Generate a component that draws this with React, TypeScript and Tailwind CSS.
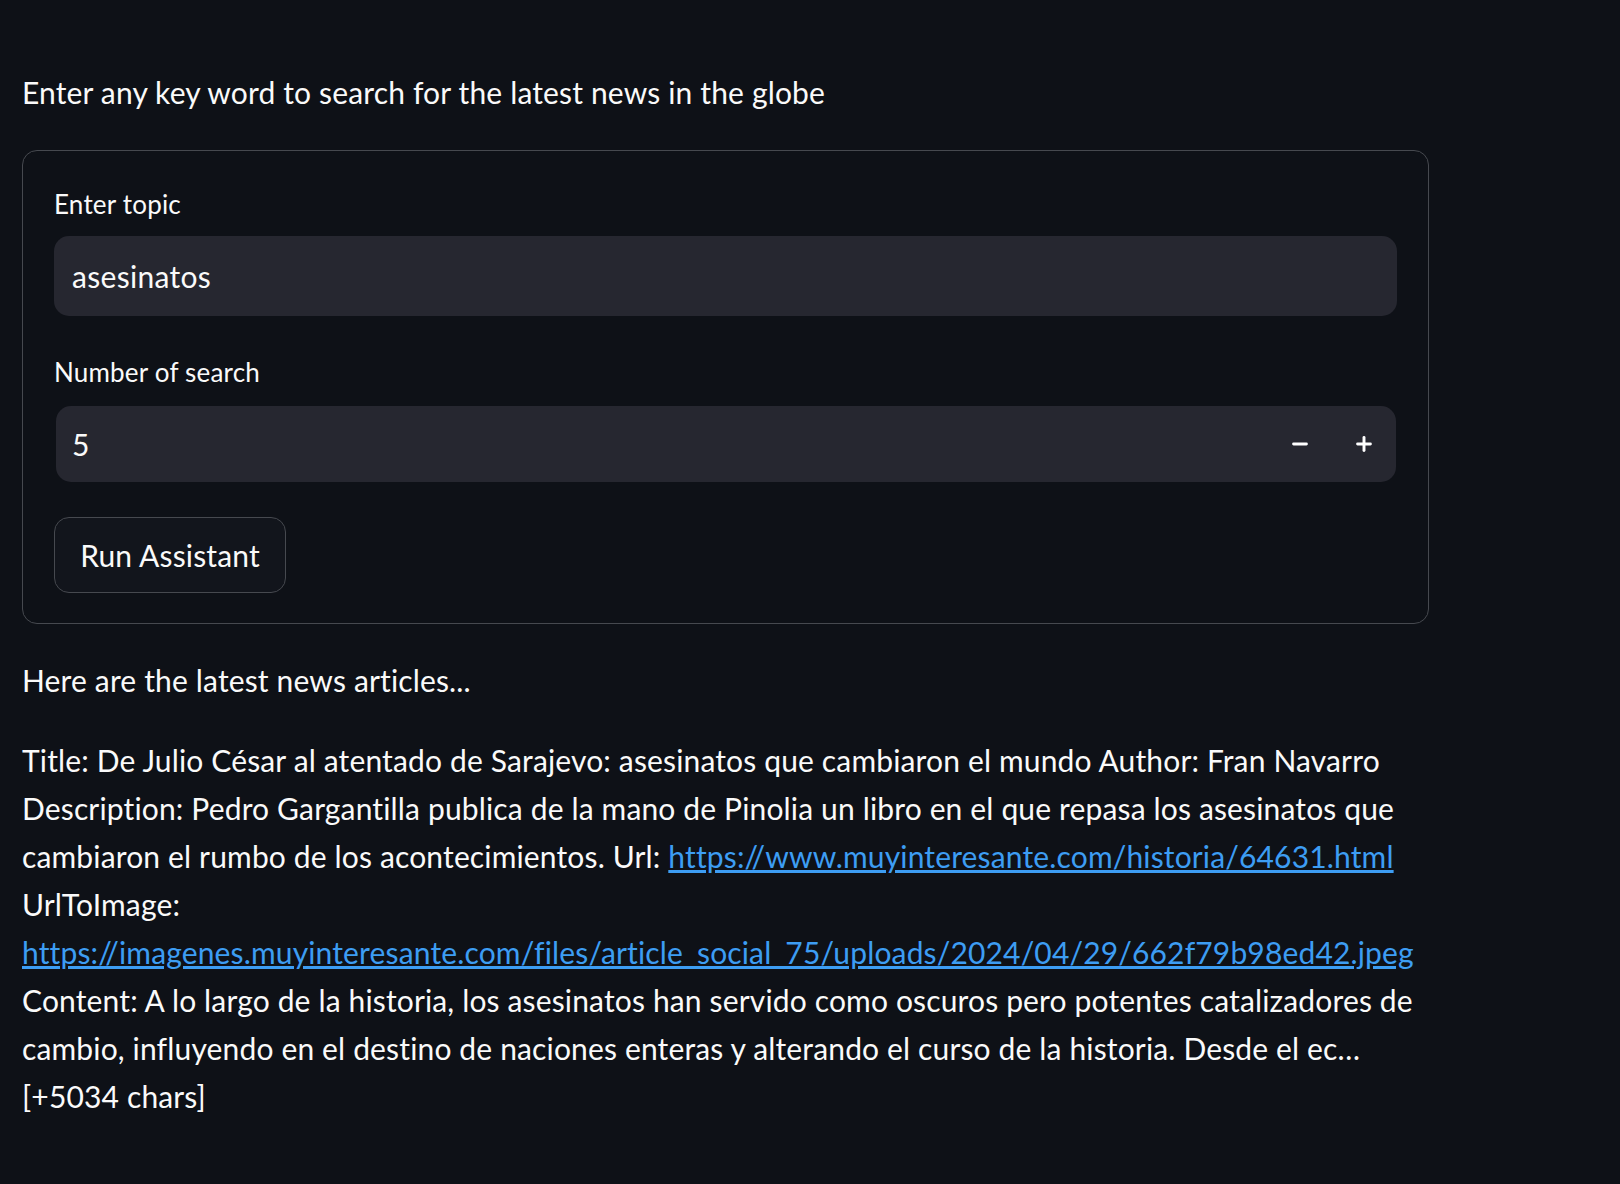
import { Minus, Plus } from "lucide-react";

const font = { fontFamily: "Lato, 'Open Sans', sans-serif" };

function Field({ label, children, gap }: { label: string; children: React.ReactNode; gap: string }) {
  return (
    <div>
      <div className={`text-[26px] leading-[30px] tracking-[0.2px] text-[#fafafa] ${gap}`}>{label}</div>
      {children}
    </div>
  );
}

export default function App() {
  return (
    <div
      className="min-h-[1184px] w-full bg-[#0e1117] text-[#fafafa] pl-[22px] pt-[68px] pb-[40px] tracking-[0.15px]"
      style={font}
    >
      <div className="w-[1407px]">
        <p className="text-[30px] leading-[48px]">
          Enter any key word to search for the latest news in the globe
        </p>

        {/* Form */}
        <div className="mt-[34px] rounded-[15px] border border-[#46494f] px-[31px] pt-[38px] pb-[30px]">
          <Field label="Enter topic" gap="mb-[17px]">
            <div className="flex h-[80px] items-center rounded-[15px] bg-[#262730] px-[18px] text-[30px] tracking-[0.3px]">
              asesinatos
            </div>
          </Field>

          <div className="mt-[41px]">
            <Field label="Number of search" gap="mb-[19px]">
              <div className="ml-[2px] mr-[1px] flex h-[76px] items-center rounded-[15px] bg-[#262730] pl-[16px] text-[30px]">
                <span className="flex-1">5</span>
                <button className="flex h-full w-[64px] items-center justify-center text-white">
                  <Minus className="h-[22px] w-[22px]" strokeWidth={3.2} />
                </button>
                <button className="flex h-full w-[64px] items-center justify-center text-white">
                  <Plus className="h-[22px] w-[22px]" strokeWidth={3.2} />
                </button>
              </div>
            </Field>
          </div>

          <button className="mt-[35px] flex h-[76px] w-[232px] items-center justify-center rounded-[15px] border border-[#46494f] bg-[#12151c] text-[30px] text-[#fafafa]">
            Run Assistant
          </button>
        </div>

        <p className="mt-[32px] text-[30px] leading-[48px]">Here are the latest news articles...</p>

        <p className="mt-[32px] text-[30px] leading-[48px]">
          Title: De Julio César al atentado de Sarajevo: asesinatos que cambiaron el mundo Author: Fran Navarro
          <br />
          Description: Pedro Gargantilla publica de la mano de Pinolia un libro en el que repasa los asesinatos que
          <br />
          cambiaron el rumbo de los acontecimientos. Url:{" "}
          <a href="#" className="text-[#3d9df3] underline">
            https://www.muyinteresante.com/historia/64631.html
          </a>
          <br />
          UrlToImage:
          <br />
          <a href="#" className="text-[#3d9df3] underline">
            https://imagenes.muyinteresante.com/files/article_social_75/uploads/2024/04/29/662f79b98ed42.jpeg
          </a>
          <br />
          Content: A lo largo de la historia, los asesinatos han servido como oscuros pero potentes catalizadores de
          <br />
          cambio, influyendo en el destino de naciones enteras y alterando el curso de la historia. Desde el ec…
          <br />
          [+5034 chars]
        </p>
      </div>
    </div>
  );
}
